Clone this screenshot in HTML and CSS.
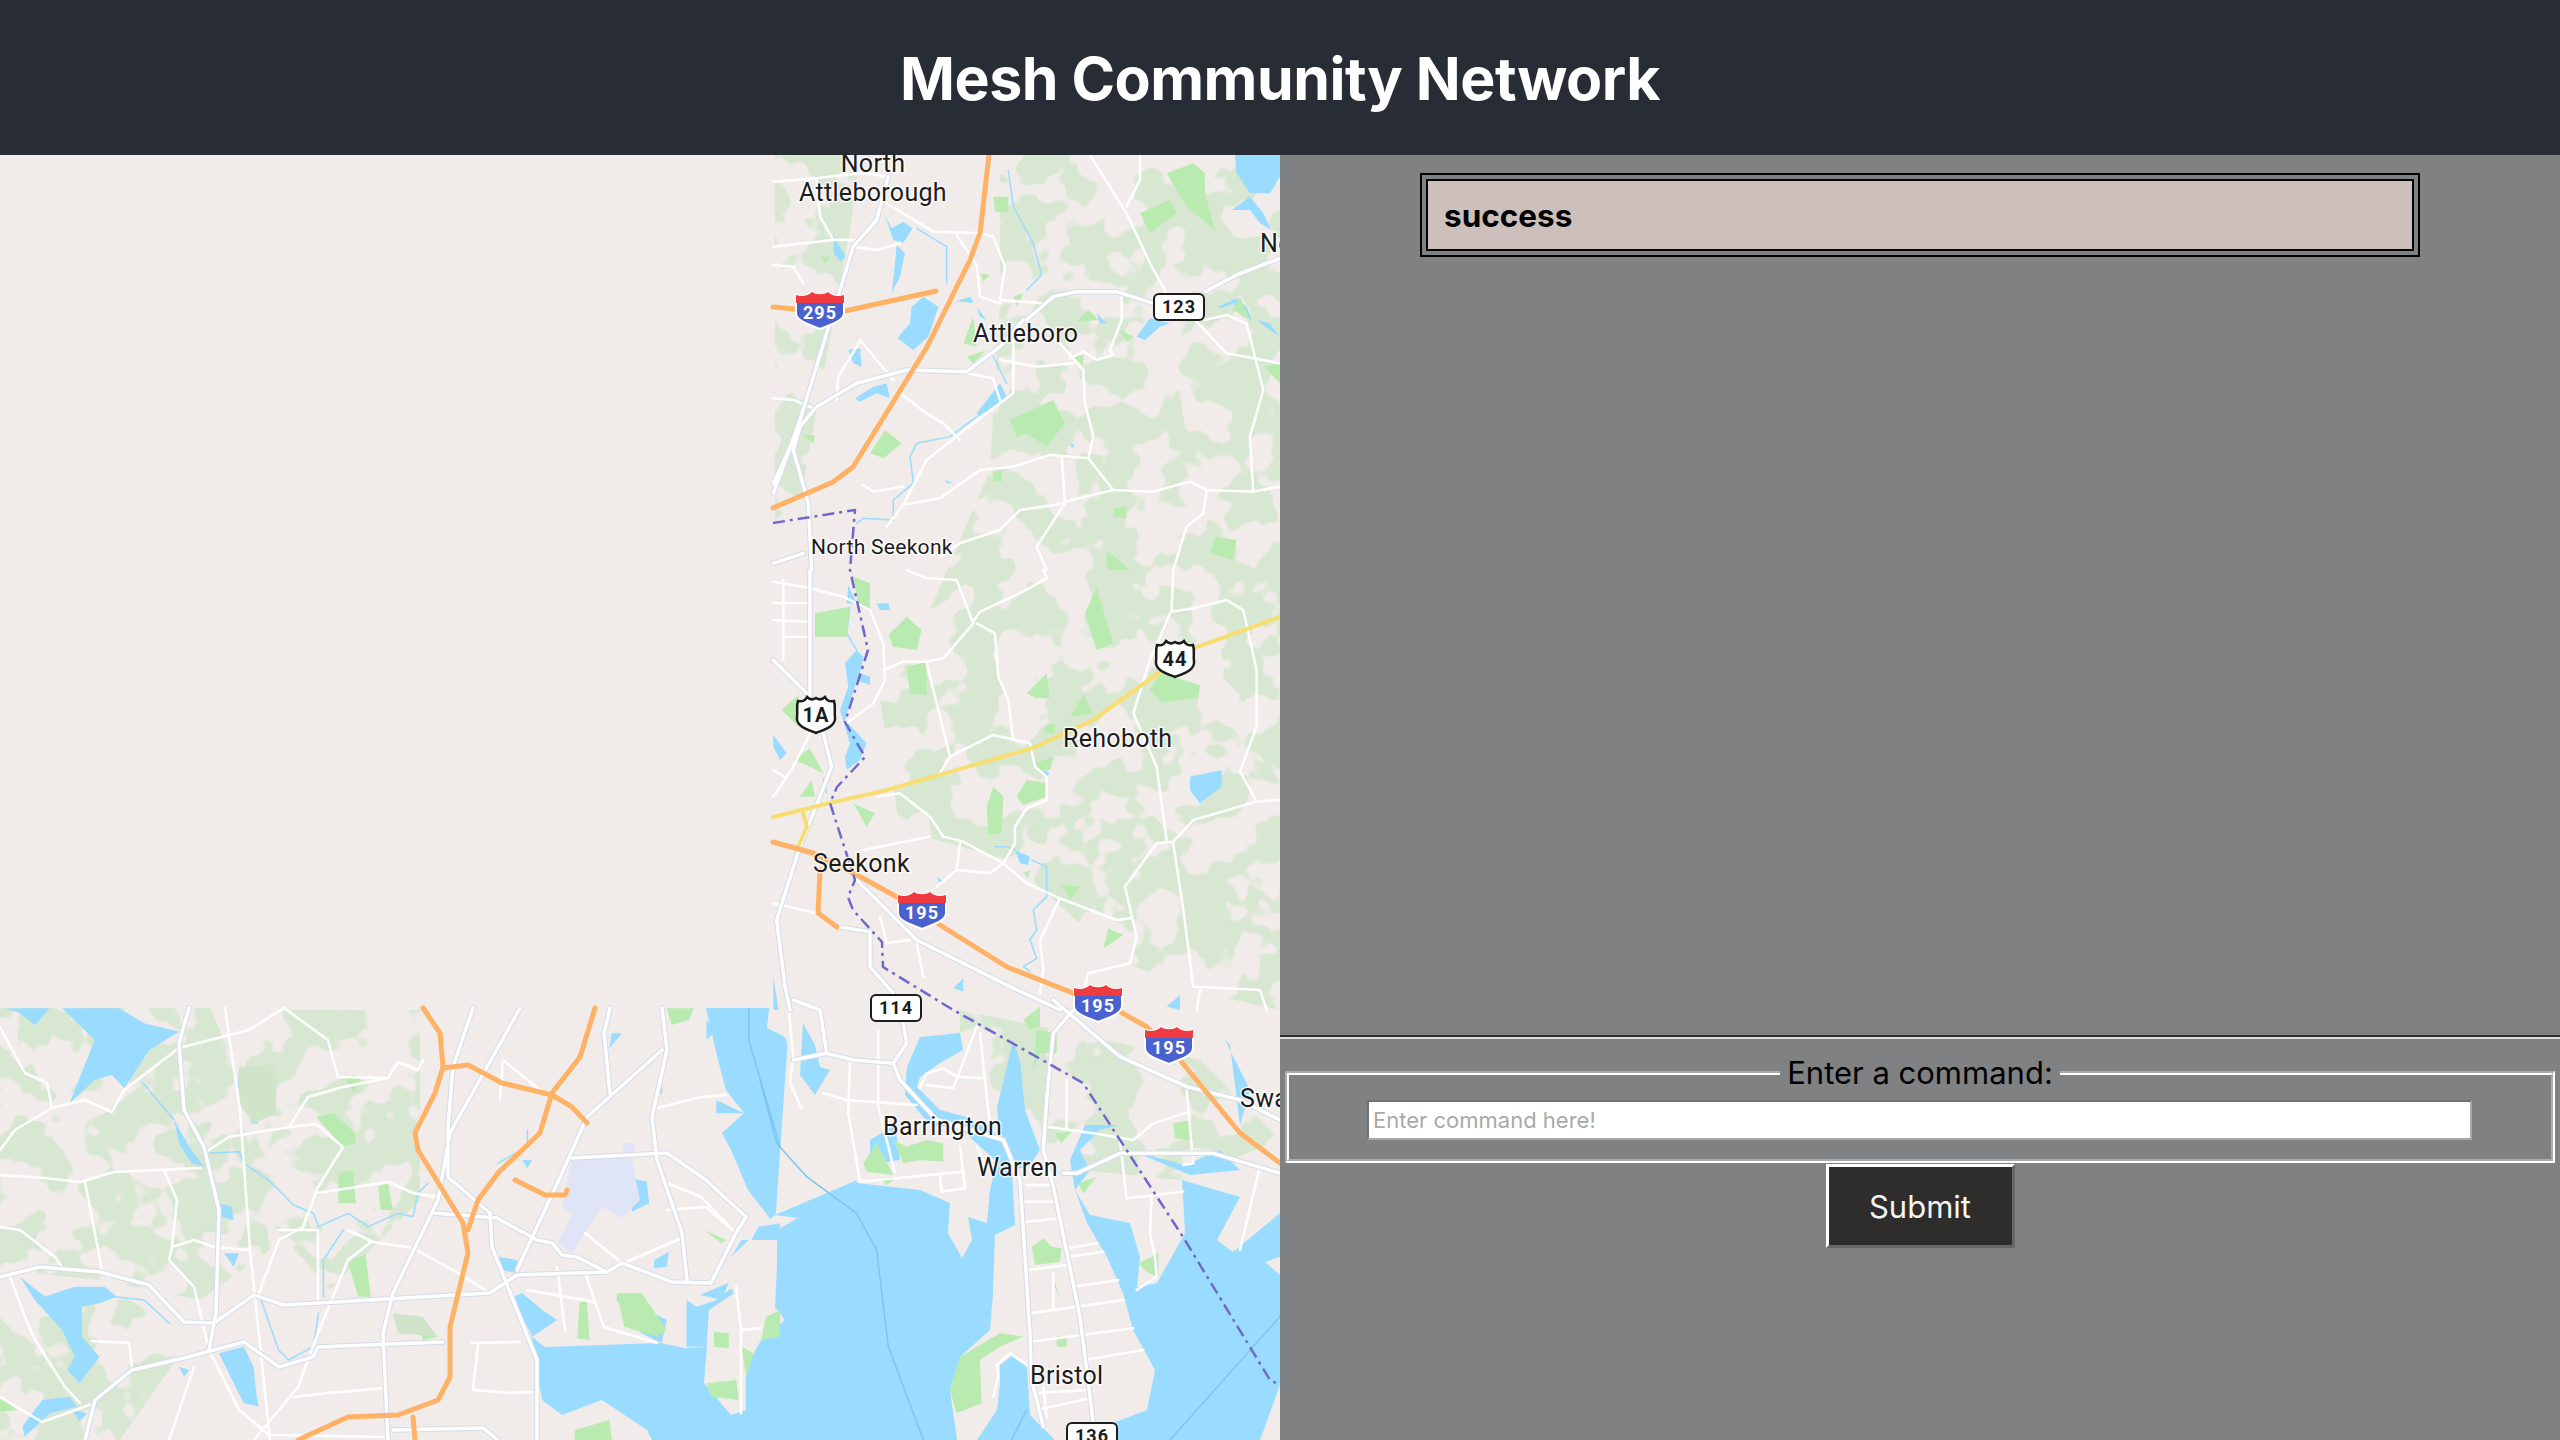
FILE: index.html
```html
<!DOCTYPE html>
<html lang="en">

<head>
    <meta charset="UTF-8">
    <meta name="viewport" content="width=device-width, initial-scale=1.0">
    <title>Mesh Community Network</title>
    <link rel="stylesheet" href="styles.css">
</head>

<body>
    <header class="app-header">
        <h1>Mesh Community Network</h1>
    </header>

    <main class="app-main">
        <svg class="map" viewBox="0 155 1280 1285" aria-label="Map">
            <defs>
                <filter id="mottle" x="0" y="0" width="100%" height="100%" color-interpolation-filters="sRGB">
                    <feTurbulence type="fractalNoise" baseFrequency=".022" numOctaves="3" seed="11"/>
                    <feColorMatrix values="0 0 0 0 .847  0 0 0 0 .906  0 0 0 0 .824  22 0 0 0 -10.2"/>
                </filter>
                <clipPath id="woods">
                    <polygon points="1000,155 1280,155 1280,1010 1190,990 1120,960 1010,860 900,830 880,700 930,610 990,470 1000,300"/>
                    <polygon points="0,1008 210,1008 250,1100 270,1250 200,1300 100,1280 0,1270"/>
                    <polygon points="0,1290 130,1300 190,1340 120,1440 0,1440"/>
                    <polygon points="775,155 860,155 850,230 800,500 775,520"/>
                    <polygon points="960,1010 1200,1060 1280,1140 1180,1180 1080,1170 960,1080"/>
                    <polygon points="240,1010 420,1010 420,1200 330,1290 260,1210"/>
                </clipPath>

                <g id="majors">
                    <polyline points="0,1277 40,1267 100,1272 149,1285 184,1322 214,1323 254,1295 284,1305 490,1293 517,1275 607,1272 622,1263 672,1282 711,1283 736,1233 746,1217 706,1180 667,1153 572,1158"/>
                    <polyline points="189,1008 179,1043 184,1110 204,1147 219,1210 216,1313 209,1350"/>
                    <polyline points="85,1440 95,1400 132,1370 184,1358 244,1342 279,1367 313,1357 318,1347 443,1342"/>
                    <polyline points="520,1008 450,1133 438,1200 393,1293 383,1333 388,1440"/>
                    <polyline points="473,1008 453,1067 448,1127 448,1177 490,1213 492,1247 537,1360 537,1440"/>
                    <polyline points="610,1008 604,1033 610,1093"/>
                    <polyline points="662,1050 587,1117 562,1173 517,1270"/>
                    <polyline points="662,1008 667,1050 652,1117 657,1160 682,1233 687,1280"/>
                    <polyline points="433,1213 497,1218 537,1240 552,1243 562,1255 577,1257 607,1272"/>
                    <polyline points="393,1430 483,1428 498,1440"/>
                    <g transform="translate(760 150) scale(.3333)">
                        <polyline points="800,510 880,440 950,425 1070,425 1180,460"/>
                        <polyline points="1335,425 1430,375 1560,325"/>
                        <polyline points="40,1000 120,830 170,770 290,700 440,660 620,665 720,590 790,510"/>
                        <polyline points="40,1030 120,810 280,290 350,210 385,80"/>
                        <polyline points="120,830 100,900 145,1060 155,1260"/>
                        <polyline points="40,1240 130,1210"/>
                    </g>
                    <g transform="translate(760 570) scale(.3333)">
                        <polyline points="150,0 150,380 190,490 215,590 120,830 50,1050 75,1250 90,1320"/>
                        <polyline points="40,270 140,370"/>
                        <polyline points="280,920 470,1110 750,1250 900,1320"/>
                        <polyline points="230,1070 330,1085 330,1190 400,1270"/>
                        <polyline points="100,830 230,880"/>
                    </g>
                    <g transform="translate(760 1000) scale(.3333)">
                        <polyline points="400,190 440,130 430,70"/>
                        <polyline points="400,190 420,240 530,360 730,420 780,540 810,1000 815,1140 850,1280"/>
                        <polyline points="100,180 200,160 280,180 400,190"/>
                        <polyline points="200,160 180,30 100,0"/>
                        <polyline points="940,30 880,100 860,300 850,450 880,560 960,950 1000,1270"/>
                        <polyline points="880,0 1080,170 1280,260 1440,300 1560,360"/>
                        <polyline points="910,520 950,520 1080,460 1360,460 1560,520"/>
                    </g>
                </g>

                <path id="interstate" d="M-24 -14C-18 -12 -12 -13 -8 -17C-4 -14 4 -14 8 -17C12 -13 18 -12 24 -14L24 4C24 12 10 16 0 20C-10 16 -24 12 -24 4Z"/>
                <path id="interstate-top" d="M-24 -14C-18 -12 -12 -13 -8 -17C-4 -14 4 -14 8 -17C12 -13 18 -12 24 -14L24 -6L-24 -6Z"/>
                <path id="us-route" d="M-18 -14C-14 -13 -11 -14 -9 -18C-6 -15 -3 -15 0 -17C3 -15 6 -15 9 -18C11 -14 14 -13 18 -14C20 -8 18 -3 19 2C20 11 10 14 0 18C-10 14 -20 11 -19 2C-18 -3 -20 -8 -18 -14Z"/>
            </defs>

            <rect class="land" x="0" y="155" width="1280" height="1285"/>

            <!-- bay, then the land that lies over it -->
            <g class="water">
                <polygon points="706,1008 718,1060 726,1090 744,1113 722,1133 731,1150 748,1190 775,1225 790,1008"/>
                <polygon points="775,1215 1280,1000 1280,1440 652,1440 647,1430 602,1400 562,1415 542,1400 532,1337 545,1347 660,1343 685,1348 707,1347 722,1300 700,1295 735,1280 745,1240"/>
            </g>
            <g class="land">
                <polygon points="775,1215 798,1218 777,1230 777,1267 775,1307 785,1320 760,1342 746,1367 746,1410 731,1415 704,1383 707,1347 722,1300 745,1240"/>
                <polygon points="773,155 1280,155 1280,1213 1233,1252 1217,1240 1240,1197 1182,1180 1185,1233 1157,1283 1137,1287 1140,1257 1130,1223 1090,1215 1075,1190 1087,1223 1107,1257 1123,1293 1133,1330 1155,1370 1147,1410 1113,1423 1093,1440 957,1440 950,1390 960,1357 990,1330 993,1293 995,1233 992,1200 987,1223 968,1217 972,1240 962,1258 948,1233 950,1203 920,1190 857,1183 850,1150 828,1122 803,1108 788,1083 793,1060 785,1037 767,1028 770,1000"/>
                <polygon points="1260,1440 1280,1385 1280,1440"/>
                <polygon points="1280,1257 1265,1262 1280,1275"/>
            </g>

            <g clip-path="url(#woods)">
                <rect class="mottle" x="0" y="155" width="1280" height="1285"/>
            </g>

            <g class="water">
                <polygon points="1000,1365 1013,1355 1027,1367 1030,1415 1055,1440 977,1440 997,1410 1000,1383"/>
                <polygon points="1013,1040 1020,1060 1025,1110 1040,1150 1030,1165 1012,1170 1015,1225 995,1235 987,1223 990,1190 1000,1150 997,1107 1005,1075"/>
                <polygon points="907,1067 920,1037 960,1033 963,1050 940,1063 920,1077 917,1087 940,1110 967,1117 1000,1137 1007,1160 995,1160 960,1128 930,1125 905,1095"/>
                <polygon points="803,1023 815,1045 820,1067 830,1070 815,1095 800,1075"/>
                <polygon points="870,1140 895,1125 900,1160 870,1165"/>
                <polygon points="1075,1190 1090,1170 1080,1150 1100,1130 1120,1125 1085,1125 1070,1160"/>
                <polygon points="1230,1045 1240,1125 1250,1090 1225,1040"/>
                <polygon points="1130,1150 1185,1165 1220,1150 1240,1170 1190,1175"/>

                <g transform="translate(760 150) scale(.3333)">
                    <polygon points="375,195 395,235 430,215 458,235 430,278 400,270"/>
                    <polygon points="410,285 435,310 420,380 395,430 405,340"/>
                    <polygon points="220,255 240,290 257,320 240,335 222,310"/>
                    <polygon points="490,440 535,470 505,560 460,600 412,565 450,520 455,470"/>
                    <polygon points="1425,15 1560,15 1560,80 1530,130 1470,130 1430,70"/>
                    <polygon points="1470,140 1510,190 1535,240 1500,220 1470,180 1415,180"/>
                    <polygon points="1130,560 1170,505 1230,520 1200,530 1155,570"/>
                    <polygon points="1375,470 1430,445 1460,470 1475,510 1450,500 1420,460 1385,475"/>
                    <polygon points="1490,510 1530,520 1560,560 1530,540"/>
                    <polygon points="265,600 300,595 305,650 280,640"/>
                    <polygon points="285,745 340,710 380,700 390,745 350,730 300,755"/>
                    <polygon points="720,700 740,740 700,770 655,800 650,790"/>
                    <polygon points="930,880 945,885 935,895"/>
                    <polygon points="555,990 580,1000 560,1000"/>
                    <polygon points="585,455 630,440 640,460 610,455"/>
                    <polygon points="650,470 680,510 660,500"/>
                    <polygon points="1010,490 1040,520 1020,520"/>
                </g>
                <g transform="translate(760 570) scale(.3333)">
                    <polygon points="265,45 290,100 260,100"/>
                    <polygon points="350,100 385,100 390,120 360,120"/>
                    <polygon points="290,240 310,260 300,310 330,320 330,345 290,330 255,450 320,520 300,570 260,600 255,560 270,520 240,420 265,350 255,280"/>
                    <polygon points="1290,620 1385,600 1385,650 1320,700 1290,660"/>
                    <polygon points="765,840 810,860 805,885 780,880"/>
                    <polygon points="850,600 870,610 855,625"/>
                    <polygon points="530,920 552,935 540,945"/>
                    <polygon points="40,495 80,550 60,570 40,530"/>
                    <polygon points="580,1255 610,1225 610,1265"/>
                    <polygon points="1220,1310 1260,1275 1260,1320"/>
                    <polygon points="40,1215 55,1320 40,1320"/>
                </g>
                <g transform="translate(0 1000) scale(.4975 .3333)">
                    <polygon points="10,25 100,25 70,75 40,40"/>
                    <polygon points="125,25 240,25 290,70 360,95 300,150 250,265 225,225 190,240 140,310 190,120"/>
                    <polygon points="480,215 500,220 500,265 478,265"/>
                    <polygon points="500,330 518,340 518,372 505,370"/>
                    <polygon points="1000,770 1040,780 1040,820 1010,810"/>
                    <polygon points="1270,535 1300,545 1305,610 1270,635"/>
                    <polygon points="1315,780 1345,755 1340,800 1315,805"/>
                    <polygon points="440,1060 490,1040 510,1100 515,1180 520,1220 490,1210 460,1120"/>
                    <polygon points="40,830 90,890 150,860 210,860 235,890 200,910 165,920 165,1010 200,1070 160,1150 135,1110 150,1070 125,990 70,900"/>
                    <polygon points="85,1200 140,1190 155,1220 100,1240 50,1310 45,1280"/>
                    <polygon points="145,1230 175,1240 160,1265"/>
                    <polygon points="350,360 380,440 410,500 385,490 360,430"/>
                    <polygon points="440,610 465,620 470,660 445,650"/>
                    <polygon points="450,760 480,760 470,800"/>
                    <polygon points="360,1100 380,1110 370,1130"/>
                    <polygon points="1230,100 1250,100 1225,145"/>
                    <polygon points="1320,260 1332,260 1330,285"/>
                    <polygon points="1420,60 1440,90 1420,120"/>
                    <polygon points="1440,300 1495,340 1440,340"/>
                    <polygon points="1380,900 1400,920 1440,900 1470,865 1475,880 1425,930 1420,1040 1380,1040"/>
                    <polygon points="1050,480 1070,480 1060,505"/>
                    <polygon points="1490,720 1505,720 1470,770"/>
                    <polygon points="1525,680 1568,670 1568,720 1510,720"/>
                    <polygon points="1050,880 1090,930 1120,960 1070,1010 1030,890"/>
                    <polygon points="1240,880 1340,960 1330,1030 1290,1000 1240,900"/>
                </g>
            </g>

            <g class="river">
                <g transform="translate(760 150) scale(.3333)">
                    <polyline points="745,60 760,170 820,280 845,375 800,420"/>
                    <polyline points="470,235 560,290 560,400"/>
                    <polyline points="650,800 570,860 470,880 450,920 460,1000 400,1050 400,1110 310,1105 290,1120"/>
                    <polyline points="700,620 740,700"/>
                </g>
                <g transform="translate(760 570) scale(.3333)">
                    <polyline points="270,110 260,190 290,240"/>
                    <polyline points="705,830 740,830 765,840"/>
                    <polyline points="815,870 860,890 860,980 820,1020 830,1080 810,1110 830,1165 790,1190 810,1205"/>
                    <polyline points="190,625 200,670"/>
                </g>
                <g transform="translate(0 1000) scale(.4975 .3333)">
                    <polyline points="420,460 480,455 490,490 540,540 590,615 630,640 640,680 700,640 740,680 800,640 830,650 840,580 860,550"/>
                    <polyline points="285,245 350,360"/>
                    <polyline points="525,900 560,1050 580,1080 630,1040 640,940"/>
                    <polyline points="650,890 650,780 690,690"/>
                    <polyline points="1000,490 1060,440 1060,390"/>
                    <polyline points="230,890 290,900 340,970"/>
                </g>
            </g>
            <g class="channel">
                <g transform="translate(760 1000) scale(.3333)">
                    <polyline points="0,240 50,430 140,530 290,640 350,750 385,1040 490,1320"/>
                    <polyline points="1560,950 1230,1320"/>
                    <polyline points="800,1230 755,1320"/>
                </g>
                <g transform="translate(0 1000) scale(.4975 .3333)">
                    <polyline points="1505,25 1505,120 1568,440"/>
                </g>
            </g>

            <g class="park">
                <g transform="translate(760 150) scale(.3333)">
                    <polygon points="700,140 745,140 745,185 705,185"/>
                    <polygon points="1220,70 1300,40 1335,70 1335,130 1365,240 1280,170"/>
                    <polygon points="1140,190 1230,150 1250,190 1170,250"/>
                    <polygon points="950,515 985,480 1015,510"/>
                    <polygon points="375,840 425,880 370,925 330,910"/>
                    <polygon points="750,810 880,750 915,820 860,890 800,850 770,860"/>
                    <polygon points="1365,1160 1430,1170 1420,1230 1350,1210"/>
                    <polygon points="1060,1075 1100,1070 1100,1105 1060,1100"/>
                    <polygon points="640,500 650,590 610,580"/>
                    <polygon points="1510,650 1560,640 1560,700"/>
                    <polygon points="1040,1200 1110,1260 1040,1260"/>
                    <polygon points="700,970 725,960 725,995 700,995"/>
                    <polygon points="125,855 165,855 160,880"/>
                    <polygon points="620,620 680,600 640,640"/>
                    <polygon points="180,320 215,320 195,340"/>
                    <polygon points="1080,540 1120,560 1100,575"/>
                    <polygon points="940,620 970,615 970,650"/>
                    <polygon points="660,370 690,375 670,395"/>
                    <polygon points="760,440 790,430 770,470"/>
                    <polygon points="1440,440 1470,510 1420,480"/>
                </g>
                <g transform="translate(760 570) scale(.3333)">
                    <polygon points="280,20 330,40 330,120 295,110"/>
                    <polygon points="165,130 270,110 260,200 165,200"/>
                    <polygon points="385,195 440,140 485,180 470,240 400,230"/>
                    <polygon points="440,290 500,275 500,375 450,370"/>
                    <polygon points="975,130 1010,55 1060,220 1010,240"/>
                    <polygon points="800,370 860,310 870,385 830,385"/>
                    <polygon points="930,440 970,375 1000,430"/>
                    <polygon points="1170,360 1200,310 1320,345 1315,385 1205,395"/>
                    <polygon points="770,680 800,630 860,640 860,680 790,705"/>
                    <polygon points="680,710 700,650 730,680 725,790 685,795"/>
                    <polygon points="825,580 880,560 870,600 835,600"/>
                    <polygon points="65,420 115,375 115,470"/>
                    <polygon points="100,570 150,535 190,610 150,590"/>
                    <polygon points="120,680 155,630 165,680"/>
                    <polygon points="280,700 345,730 320,770"/>
                    <polygon points="905,945 960,950 930,990"/>
                    <polygon points="1030,1135 1045,1075 1090,1095"/>
                    <polygon points="850,470 885,460 885,490 855,490"/>
                    <polygon points="790,910 810,900 805,925"/>
                </g>
                <g transform="translate(760 1000) scale(.3333)">
                    <polygon points="815,740 850,715 875,740 905,745 900,785 825,795"/>
                    <polygon points="790,60 840,20 840,80 810,90"/>
                    <polygon points="830,90 890,100 890,160 840,160 820,210"/>
                    <polygon points="890,1010 920,1010 920,1040 890,1040"/>
                    <polygon points="600,1070 720,1000 790,1010 720,1040 660,1080 665,1210 590,1240 570,1170"/>
                    <polygon points="1135,790 1195,760 1195,830 1160,815"/>
                    <polygon points="1240,370 1295,360 1290,420 1245,415"/>
                    <polygon points="885,400 935,395 905,430"/>
                    <polygon points="310,490 350,430 400,525 320,515"/>
                    <polygon points="955,550 1010,530 970,580"/>
                    <polygon points="880,830 900,895 885,860"/>
                    <polygon points="360,535 415,530 380,555"/>
                    <polygon points="400,420 440,440 500,420 550,430 550,485 480,480 430,490"/>
                </g>
                <g transform="translate(0 1000) scale(.4975 .3333)">
                    <polygon points="635,350 670,340 715,400 715,430 690,440"/>
                    <polygon points="700,790 735,760 745,890 720,890"/>
                    <polygon points="680,520 710,510 715,610 680,610"/>
                    <polygon points="760,560 780,550 790,630 765,630"/>
                    <polygon points="1240,880 1290,880 1340,990 1320,1010 1255,980"/>
                    <polygon points="1165,905 1180,905 1185,1020 1160,1015"/>
                    <polygon points="1420,1150 1480,1140 1485,1200 1430,1190"/>
                    <polygon points="1435,995 1465,1000 1465,1045 1435,1040"/>
                    <polygon points="1155,1290 1225,1260 1230,1320 1155,1320"/>
                    <polygon points="1490,1040 1515,1060 1500,1130"/>
                    <polygon points="1540,950 1568,930 1568,1010 1530,1020"/>
                    <polygon points="0,1190 35,1230 0,1235"/>
                    <polygon points="840,960 880,1010 850,1020"/>
                    <polygon points="710,225 725,240 710,280 695,240"/>
                    <polygon points="1415,690 1460,720 1450,730"/>
                    <polygon points="1240,530 1255,530 1250,570"/>
                    <polygon points="1340,25 1395,25 1385,60 1350,75"/>
                </g>
            </g>
            <g class="park-soft">
                <g transform="translate(0 1000) scale(.4975 .3333)">
                    <polygon points="480,200 555,195 555,340 510,370 480,310"/>
                    <polygon points="790,940 850,950 880,1010 800,1000"/>
                </g>
            </g>

            <polygon class="airport" points="572,1160 622,1157 624,1143 635,1143 632,1160 640,1200 622,1218 602,1207 572,1253 558,1243 572,1213 562,1207"/>

            <g class="street">
                <polyline points="0,1027 25,1073 47,1083 52,1108 85,1100 112,1112 124,1090 179,1048 249,1030 284,1008"/>
                <polyline points="52,1108 15,1130 0,1150"/>
                <polyline points="284,1008 328,1040 338,1077 388,1078 398,1062 418,1070 423,1060"/>
                <polyline points="289,1127 308,1097 343,1087 388,1078"/>
                <polyline points="204,1153 229,1137 289,1127 316,1124 343,1147 318,1187 303,1227 279,1240 259,1293"/>
                <polyline points="0,1175 45,1178 80,1182 114,1172 201,1168"/>
                <polyline points="85,1182 102,1270"/>
                <polyline points="164,1170 177,1200 172,1247 194,1240 214,1247 249,1250"/>
                <polyline points="172,1247 169,1260 194,1287 209,1350"/>
                <polyline points="0,1227 20,1230 55,1257 62,1267"/>
                <polyline points="10,1277 25,1317 35,1340 65,1387 80,1403"/>
                <polyline points="0,1397 42,1422 95,1403"/>
                <polyline points="92,1341 129,1343 132,1368"/>
                <polyline points="209,1350 239,1410 269,1435 388,1437"/>
                <polyline points="194,1367 169,1440"/>
                <polyline points="348,1260 318,1333 298,1387 254,1440"/>
                <polyline points="293,1397 328,1393 385,1388"/>
                <polyline points="348,1230 373,1242 413,1248 458,1273 490,1293"/>
                <polyline points="348,1260 371,1242"/>
                <polyline points="318,1193 388,1182 413,1193 438,1197"/>
                <polyline points="279,1230 318,1230 318,1300"/>
                <polyline points="585,1233 622,1263"/>
                <polyline points="682,1238 624,1263"/>
                <polyline points="657,1108 701,1097 726,1095"/>
                <polyline points="667,1183 701,1197 736,1233"/>
                <polyline points="667,1210 706,1207 736,1233"/>
                <polyline points="527,1290 595,1302 604,1327 657,1343"/>
                <polyline points="585,1272 595,1302"/>
                <polyline points="557,1267 565,1330"/>
                <polyline points="472,1343 520,1342"/>
                <polyline points="478,1345 473,1390 510,1393 532,1392"/>
                <polyline points="741,1413 741,1330 761,1328"/>
                <polyline points="736,1287 741,1330"/>
                <polyline points="225,1008 240,1110 250,1250 270,1440"/>
                <polyline points="500,1100 503,1060 540,1090"/>
                <g transform="translate(760 150) scale(.3333)">
                    <polyline points="40,95 170,85 250,75 320,70 380,80"/>
                    <polyline points="170,90 180,200 220,270 300,270"/>
                    <polyline points="40,290 130,280 220,270"/>
                    <polyline points="40,345 100,350 130,400"/>
                    <polyline points="280,290 350,300 420,280"/>
                    <polyline points="380,160 520,245 660,250 700,260 735,350 720,450 850,460"/>
                    <polyline points="590,255 650,345 660,440 720,460"/>
                    <polyline points="990,15 1100,190 1170,340 1220,430"/>
                    <polyline points="1140,15 1140,90 1100,170"/>
                    <polyline points="1335,510 1400,495 1460,520 1510,720 1470,860 1480,1025"/>
                    <polyline points="1310,515 1400,610 1560,640"/>
                    <polyline points="900,580 970,660 975,760 1000,860 985,925 1060,1020 1180,1025 1290,995 1340,1020 1480,1025 1560,1010"/>
                    <polyline points="985,925 870,915 760,950 660,960 540,1045 430,1065"/>
                    <polyline points="905,920 915,1060 830,1190 860,1260"/>
                    <polyline points="915,1060 780,1080 720,1140 600,1180 540,1220"/>
                    <polyline points="1060,1020 915,1055"/>
                    <polyline points="1340,1020 1330,1090 1280,1130 1240,1260"/>
                    <polyline points="1085,470 1085,510 1050,600 1060,615 1010,630 970,605 930,625"/>
                    <polyline points="720,630 830,650 940,640"/>
                    <polyline points="760,570 760,730 640,820 500,930 430,1065 380,1130"/>
                    <polyline points="700,685 620,670"/>
                    <polyline points="700,690 720,750"/>
                    <polyline points="420,730 500,790 550,820 600,870"/>
                    <polyline points="230,750 235,680 290,590 300,570 350,630 400,690"/>
                    <polyline points="40,745 100,750 170,780"/>
                    <polyline points="310,1005 340,1025 430,1010"/>
                    <polyline points="1085,420 1085,470"/>
                </g>
                <g transform="translate(760 570) scale(.3333)">
                    <polyline points="40,35 130,50 250,80 330,120 370,220 375,330 340,400 260,460"/>
                    <polyline points="70,30 70,270"/>
                    <polyline points="40,150 140,155"/>
                    <polyline points="40,100 150,100"/>
                    <polyline points="70,200 150,200"/>
                    <polyline points="370,300 430,275 500,275 550,265 640,160 590,30 500,25 440,0"/>
                    <polyline points="640,155 660,125 780,70 860,25 850,0"/>
                    <polyline points="650,160 705,190 715,320 745,390 760,510"/>
                    <polyline points="500,280 570,560 540,610"/>
                    <polyline points="570,560 700,495 810,520 825,590 860,620 860,690 800,715 765,770 765,820 730,880"/>
                    <polyline points="350,680 420,670 510,740 550,800 610,815 730,880 800,940 900,985 1070,1050 1110,1045"/>
                    <polyline points="310,840 510,800"/>
                    <polyline points="600,820 590,900 690,910 730,880"/>
                    <polyline points="590,900 530,950"/>
                    <polyline points="1240,0 1235,120 1170,270 1120,430 1190,590 1220,810"/>
                    <polyline points="1235,125 1300,115 1400,90 1450,120 1490,300 1490,470 1440,605 1490,695 1560,690"/>
                    <polyline points="1490,695 1300,750 1240,815 1190,820 1095,950 1130,1100 1110,1180 985,1210 975,1250"/>
                    <polyline points="1240,820 1270,1020 1300,1250 1500,1260 1520,1320"/>
                    <polyline points="1320,1260 1310,1320"/>
                    <polyline points="900,985 840,1110 850,1200 840,1270"/>
                    <polyline points="150,490 100,590 40,680"/>
                    <polyline points="40,600 80,625"/>
                    <polyline points="40,1000 170,1030"/>
                    <polyline points="470,1120 490,1220"/>
                    <polyline points="360,1040 380,1120 450,1110"/>
                </g>
                <g transform="translate(760 1000) scale(.3333)">
                    <polyline points="85,20 100,170 90,250 125,325"/>
                    <polyline points="190,280 260,300 470,315"/>
                    <polyline points="270,180 265,340 300,545 610,515"/>
                    <polyline points="355,90 355,320 405,520"/>
                    <polyline points="540,525 545,575 615,565 610,515"/>
                    <polyline points="600,440 615,565"/>
                    <polyline points="650,440 680,500"/>
                    <polyline points="480,265 500,220 550,205 590,230 670,235"/>
                    <polyline points="500,255 580,265 650,80"/>
                    <polyline points="660,100 690,380"/>
                    <polyline points="860,380 1000,400 1120,420 1180,370 1290,335"/>
                    <polyline points="1280,270 1300,490 1270,495"/>
                    <polyline points="1080,420 1100,595 1270,575"/>
                    <polyline points="1175,590 1170,700 1185,770 1190,830 1130,870"/>
                    <polyline points="800,665 900,655"/>
                    <polyline points="795,605 885,605"/>
                    <polyline points="800,555 880,555"/>
                    <polyline points="805,810 920,795"/>
                    <polyline points="925,745 1010,730"/>
                    <polyline points="930,770 1030,755"/>
                    <polyline points="945,860 1075,840"/>
                    <polyline points="810,940 1090,900"/>
                    <polyline points="815,1025 1120,985"/>
                    <polyline points="975,1080 1150,1050"/>
                    <polyline points="880,820 880,930"/>
                    <polyline points="800,1095 750,1060 710,1095 715,1130 700,1190"/>
                    <polyline points="1500,500 1440,750"/>
                    <polyline points="820,1180 980,1170"/>
                    <polyline points="830,1230 990,1195"/>
                    <polyline points="850,1160 860,1250"/>
                    <polyline points="920,240 920,390"/>
                </g>
            </g>

            <use class="road-case" href="#majors"/>
            <use class="road-fill" href="#majors"/>

            <g class="trunk">
                <polyline points="1280,617 1197,647 1160,672 1093,720 1033,748 887,790 830,803 773,817"/>
                <polyline points="803,813 807,827 798,847"/>
            </g>
            <g class="motorway">
                <polyline points="989,155 980,233 970,260 927,347 853,467 833,482 773,508"/>
                <polyline points="773,307 795,309"/>
                <polyline points="845,311 863,307 936,291"/>
                <polyline points="773,842 813,853 857,875 897,897 940,925 1007,967 1073,993 1117,1010 1147,1027 1180,1060 1240,1133 1280,1163"/>
                <polyline points="820,870 818,913 837,927"/>
                <polyline points="423,1008 440,1033 443,1067 435,1093 415,1133 418,1150 463,1223 468,1253 450,1327 450,1377 438,1400 398,1415 348,1417 298,1440"/>
                <polyline points="595,1008 580,1057 552,1093 540,1133 498,1173 478,1200 468,1230"/>
                <polyline points="443,1068 468,1065 502,1083 552,1095 572,1107 587,1123"/>
                <polyline points="515,1180 545,1195 565,1195 567,1190"/>
                <polyline points="413,1417 415,1440"/>
            </g>
            <polyline class="state-line" points="773,523 855,510 850,570 868,650 845,722 865,757 837,787 830,803 855,880 848,897 853,910 882,942 883,967 950,1008 1083,1083 1183,1237 1270,1380 1280,1385"/>

            <g class="shield-interstate">
                <g transform="translate(820 309)"><use class="shield-blue" href="#interstate"/><use class="shield-red" href="#interstate-top"/><text y="10">295</text></g>
                <g transform="translate(922 909)"><use class="shield-blue" href="#interstate"/><use class="shield-red" href="#interstate-top"/><text y="10">195</text></g>
                <g transform="translate(1098 1002)"><use class="shield-blue" href="#interstate"/><use class="shield-red" href="#interstate-top"/><text y="10">195</text></g>
                <g transform="translate(1169 1044)"><use class="shield-blue" href="#interstate"/><use class="shield-red" href="#interstate-top"/><text y="10">195</text></g>
            </g>
            <g class="shield-us">
                <g transform="translate(1175 659)"><use href="#us-route"/><text y="7">44</text></g>
                <g transform="translate(816 715)"><use href="#us-route"/><text y="7">1A</text></g>
            </g>
            <g class="shield-state">
                <g transform="translate(1179 307)"><rect x="-25" y="-13" width="50" height="26" rx="5"/><text y="6">123</text></g>
                <g transform="translate(896 1008)"><rect x="-25" y="-13" width="50" height="26" rx="5"/><text y="6">114</text></g>
                <g transform="translate(1092 1436)"><rect x="-25" y="-13" width="50" height="26" rx="5"/><text y="6">136</text></g>
            </g>

            <g class="labels">
                <text x="873" y="172" text-anchor="middle">North</text>
                <text x="873" y="201" text-anchor="middle">Attleborough</text>
                <text x="1260" y="252">Ne</text>
                <text x="973" y="342">Attleboro</text>
                <text class="label-small" x="811" y="554">North Seekonk</text>
                <text x="1063" y="747">Rehoboth</text>
                <text x="813" y="872">Seekonk</text>
                <text x="883" y="1135">Barrington</text>
                <text x="977" y="1176">Warren</text>
                <text x="1240" y="1107">Swa</text>
                <text x="1030" y="1384">Bristol</text>
            </g>
        </svg>

        <section class="console">
            <div class="output">
                <div class="status-frame">
                    <div class="status-box">success</div>
                </div>
            </div>
            <hr class="divider">
            <form class="command-form">
                <fieldset class="command-set">
                    <legend>Enter a command:</legend>
                    <input class="command-input" type="text" placeholder="Enter command here!">
                </fieldset>
                <button class="submit-btn" type="button">Submit</button>
            </form>
        </section>
    </main>
</body>

</html>
```

FILE: styles.css
```css
* {
    box-sizing: border-box;
}

html,
body {
    margin: 0;
    padding: 0;
    height: 100%;
    overflow: hidden;
}

body {
    font-family: Inter, "Liberation Sans", sans-serif;
    color: #000;
    display: flex;
    flex-direction: column;
}

.app-header {
    height: 155px;
    background: #282c34;
    display: flex;
    align-items: center;
    justify-content: center;
}

.app-header h1 {
    margin: 2px 0 0;
    color: #fff;
    font-size: 59px;
    font-weight: 700;
    letter-spacing: -0.5px;
}

.app-main {
    flex: 1;
    display: grid;
    grid-template-columns: 1280px 1280px;
    min-height: 0;
}

/* map */
.map {
    display: block;
    width: 1280px;
    height: 1285px;
    background: #f1ecea;
}

.map polyline,
.map polygon {
    vector-effect: non-scaling-stroke;
}

.land {
    fill: #f1ecea;
}

.water {
    fill: #9adcff;
}

.mottle {
    filter: url(#mottle);
}

.park {
    fill: #b9ebb0;
}

.park-soft {
    fill: #cfe4c8;
}

.airport {
    fill: #dfe4f7;
}

.river,
.channel,
.street,
.road-case,
.road-fill,
.trunk,
.motorway,
.state-line {
    fill: none;
    stroke-linejoin: round;
    stroke-linecap: round;
}

.river {
    stroke: #9adcff;
    stroke-width: 1.5;
}

.channel {
    stroke: #7fc4f5;
    stroke-width: 1.5;
}

.street {
    stroke: #fff;
    stroke-width: 2.5;
}

.road-case {
    stroke: #d5dbe9;
    stroke-width: 5.5;
}

.road-fill {
    stroke: #fff;
    stroke-width: 3.5;
}

.trunk {
    stroke: #f8dd72;
    stroke-width: 4;
}

.motorway {
    stroke: #ffb266;
    stroke-width: 5;
}

.state-line {
    stroke: #7068cc;
    stroke-width: 2.5;
    stroke-dasharray: 12 5 3 5;
    stroke-linecap: butt;
}

.labels text {
    font-family: Roboto, "Liberation Sans", sans-serif;
    font-size: 25px;
    letter-spacing: 0.3px;
    fill: #1c1c1c;
    stroke: rgba(255, 255, 255, 0.75);
    stroke-width: 3px;
    paint-order: stroke;
}

.labels .label-small {
    font-size: 21px;
}

.shield-interstate text,
.shield-us text,
.shield-state text {
    font-family: Roboto, "Liberation Sans", sans-serif;
    font-weight: 700;
    text-anchor: middle;
    letter-spacing: 1px;
}

.shield-blue {
    fill: #4a62cf;
    stroke: #fff;
    stroke-width: 2;
}

.shield-red {
    fill: #ef3b3f;
}

.shield-interstate text {
    font-size: 18px;
    fill: #fff;
}

.shield-us use {
    fill: #fff;
    stroke: #1c1c1c;
    stroke-width: 2.5;
}

.shield-us text {
    font-size: 20px;
    fill: #1c1c1c;
}

.shield-state rect {
    fill: #fff;
    stroke: #1c1c1c;
    stroke-width: 2;
}

.shield-state text {
    font-size: 18px;
    fill: #1c1c1c;
}

/* command panel */
.console {
    background: #808183;
    display: flex;
    flex-direction: column;
}

.output {
    height: 880px;
    padding-top: 18px;
}

.status-frame {
    width: 1000px;
    margin: 0 auto;
    padding: 4px;
    border: 2px solid #000;
}

.status-box {
    height: 72px;
    padding: 15px 16px 0;
    border: 2px solid #000;
    background: #cdc0bc;
    font-family: Inter, "Liberation Sans", sans-serif;
    font-size: 31.5px;
    font-weight: 700;
    line-height: 40px;
}

.divider {
    margin: 0;
    height: 4px;
    border: 0;
    border-top: 2px solid #2e2e2e;
    border-bottom: 2px solid #dcdcdc;
}

.command-form {
    display: flex;
    flex-direction: column;
    align-items: center;
}

.command-set {
    width: 1270px;
    height: 110px;
    margin: 14px 0 0;
    padding: 8px 78px 0;
    border: 4px groove #fff;
    display: flex;
    align-items: flex-start;
}

.command-set legend {
    padding: 0 7px;
    font-size: 31px;
    line-height: 39px;
    text-align: center;
}

.command-input {
    width: 1105px;
    height: 40px;
    padding: 0 4px;
    border: 2px solid;
    border-color: #727273 #a8a8a8 #a8a8a8 #727273;
    background: #fff;
    font-family: Inter, "Liberation Sans", sans-serif;
    font-size: 22px;
    outline: none;
}

.command-input::placeholder {
    color: #a9a9a9;
}

.submit-btn {
    width: 189px;
    height: 84px;
    margin-top: 1px;
    border: 3px solid;
    border-color: #fff #666 #666 #fff;
    background: #2e2d2b;
    color: #f5f5f5;
    font-family: Inter, "Liberation Sans", sans-serif;
    font-size: 31px;
}
```
